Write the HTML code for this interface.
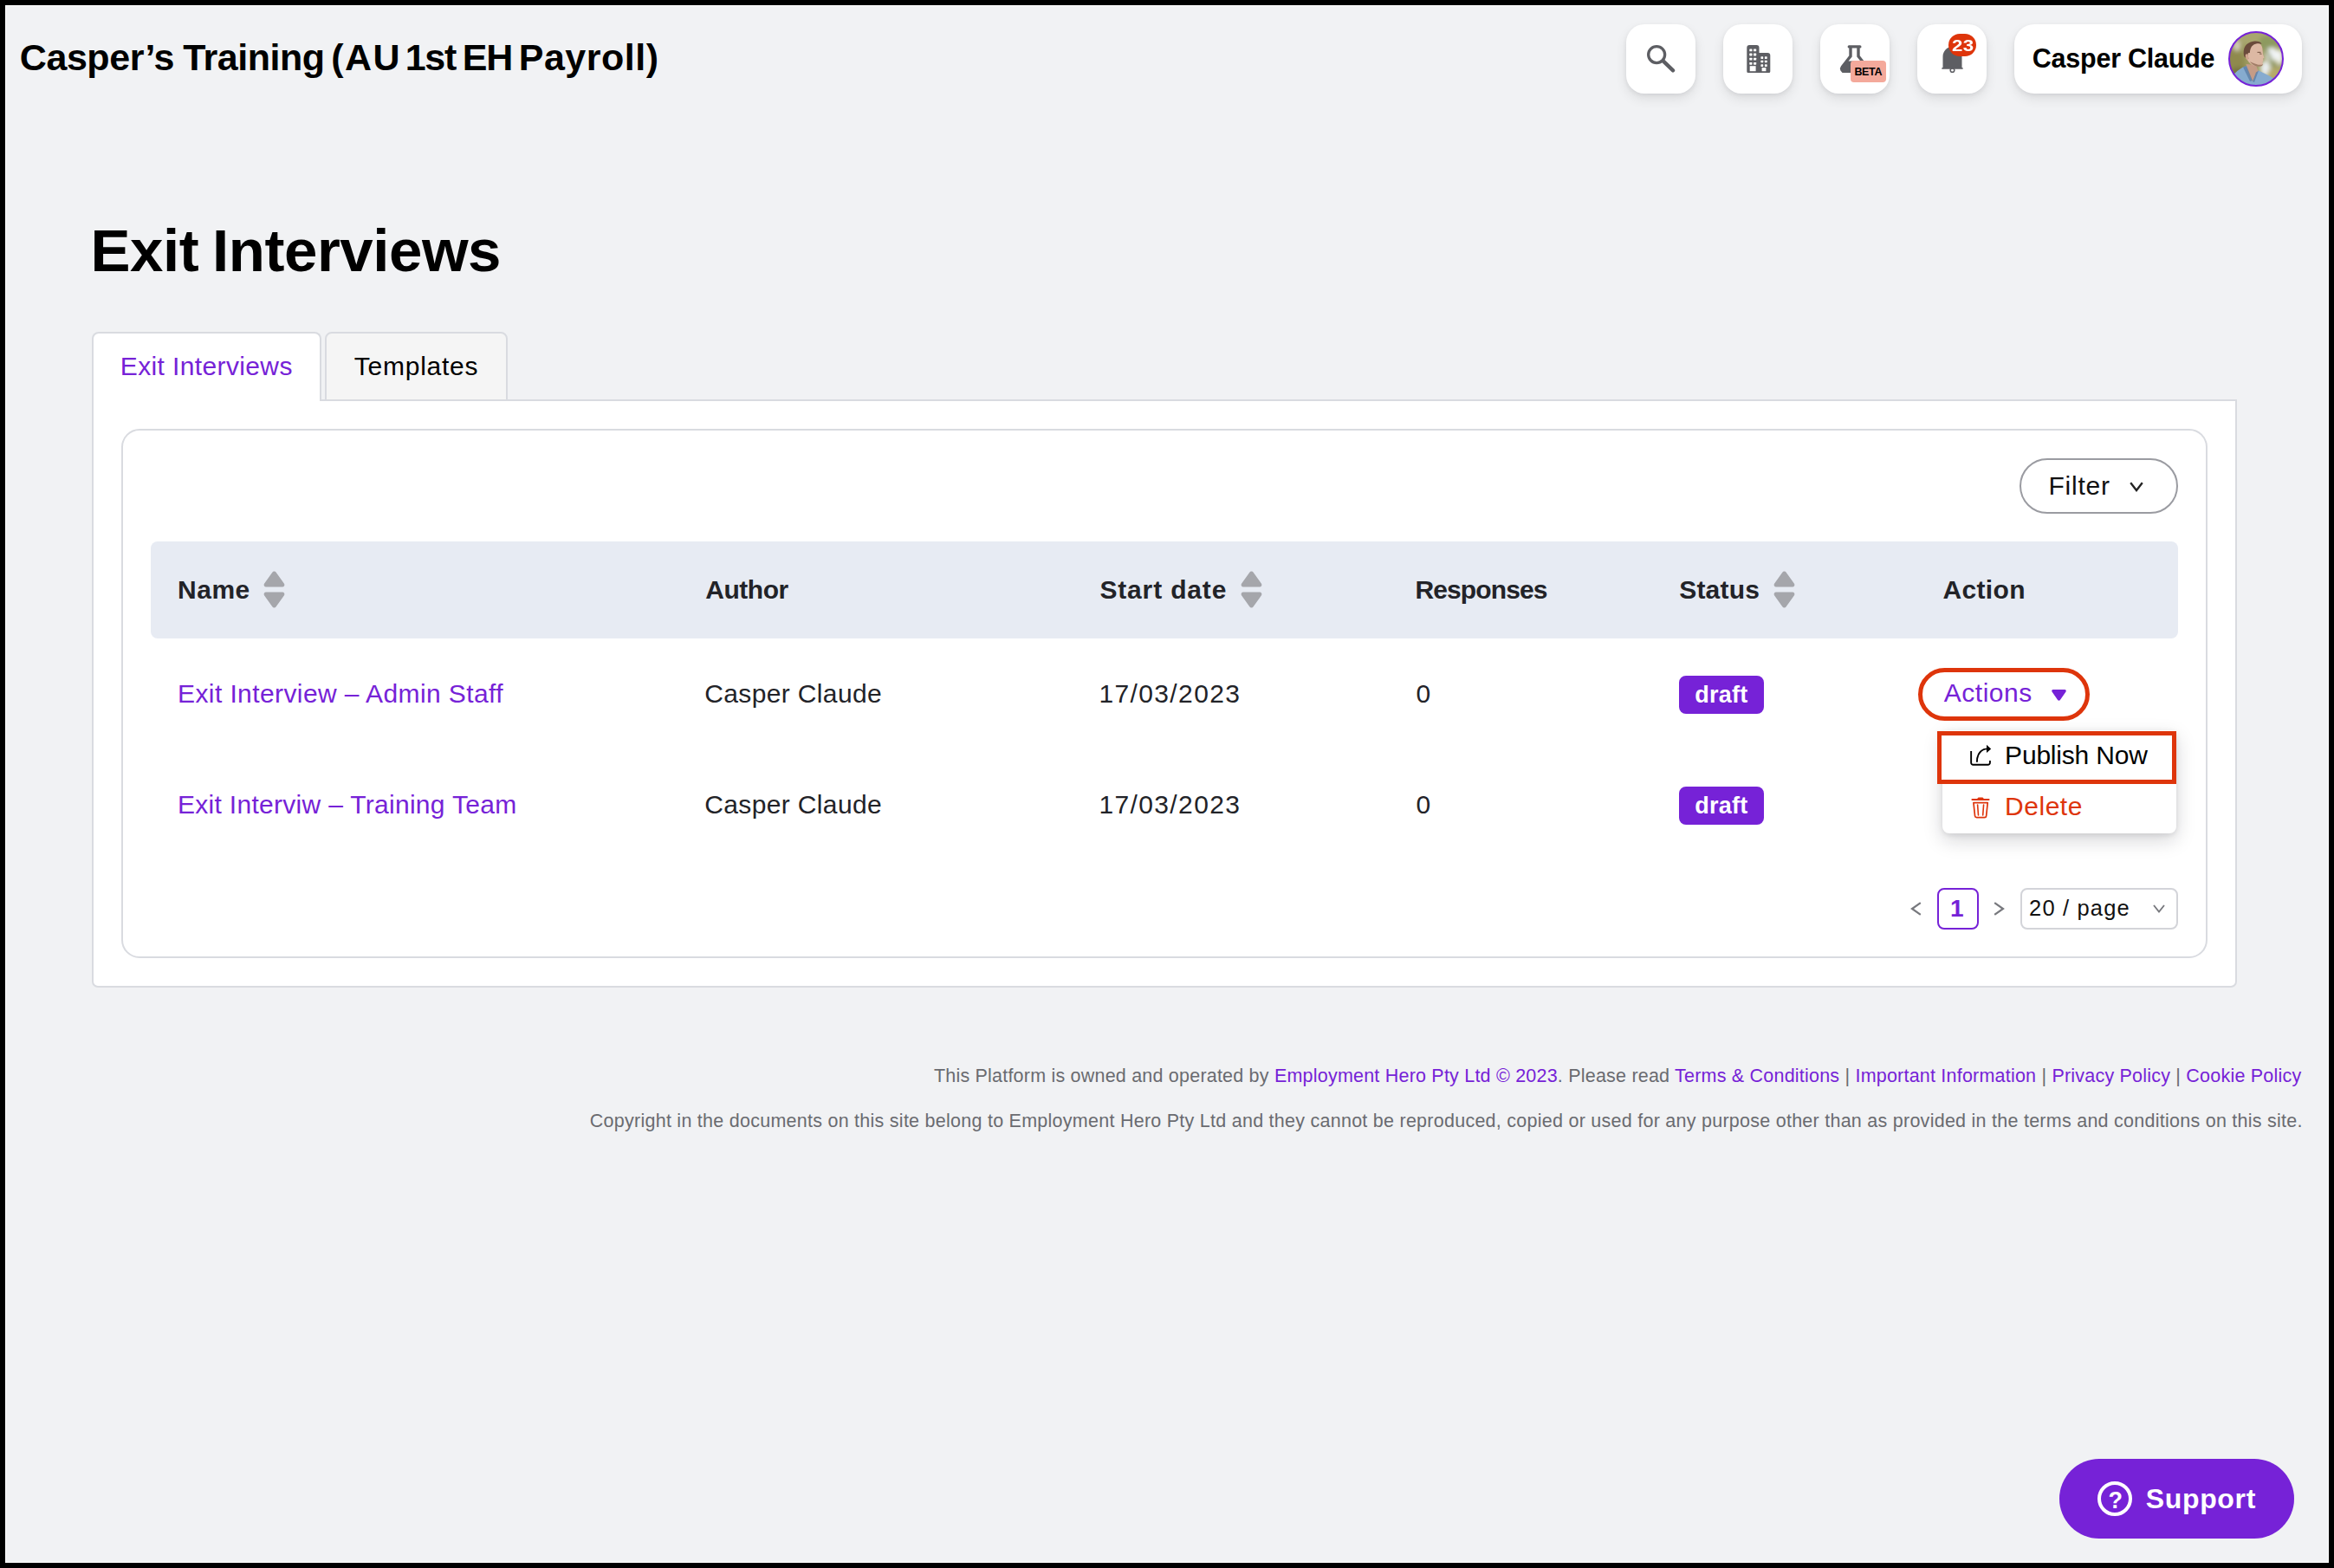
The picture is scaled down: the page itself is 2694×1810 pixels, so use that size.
<!DOCTYPE html>
<html lang="en">
<head>
<meta charset="utf-8">
<title>Exit Interviews</title>
<style>
html,body{margin:0;padding:0;}
body{width:2694px;height:1810px;overflow:hidden;background:#000;font-family:"Liberation Sans",sans-serif;}
#frame{position:absolute;left:0;top:0;width:2694px;height:1810px;background:#000;overflow:hidden;}
#page{position:absolute;left:6px;top:6px;width:2680px;height:1796px;border:1px solid #fff;background:#f1f2f4;}
.a{position:absolute;box-sizing:border-box;}
.t{position:absolute;white-space:nowrap;margin:0;padding:0;}
.hbtn{width:80px;height:80px;top:28px;border-radius:21px;background:#fff;box-shadow:0 6px 14px rgba(20,20,25,.09),0 2px 5px rgba(20,20,25,.07);}
.bd{border:2px solid #d9dbe0;}
.arrow{fill:#a5a6ab;}
svg{position:absolute;overflow:visible;}

</style>
</head>
<body>
<div id="frame">
<div id="page"></div>

<!-- top bar buttons -->
<div class="a hbtn" style="left:1877px"></div>
<div class="a hbtn" style="left:1989px"></div>
<div class="a hbtn" style="left:2101px"></div>
<div class="a hbtn" style="left:2213px"></div>
<div class="a hbtn" style="left:2325px;width:332px;border-radius:23px"></div>

<!-- search icon -->
<svg style="left:1877px;top:28px" width="80" height="80" viewBox="0 0 80 80"><circle cx="35.150" cy="35.050" r="9.500" fill="none" stroke="#5d5e63" stroke-width="3.300"/><path d="M43.200 42.900 L54.100 53.300" stroke="#5d5e63" stroke-width="4.400" stroke-linecap="round"/></svg>
<!-- building icon -->
<svg style="left:2015.500px;top:52px" width="28" height="33" viewBox="0 0 28 33"><path d="M3.300 0h8.200a3 3 0 0 1 3 3V9h9.800a3 3 0 0 1 3 3V30.600a1.500 1.500 0 0 1 -1.500 1.500H1.800a1.500 1.500 0 0 1 -1.500 -1.500V3a3 3 0 0 1 3 -3z" fill="#5d5e63"/><g fill="#fff"><rect x="3.300" y="4.500" width="3.200" height="2.800" rx=".6"/><rect x="8" y="4.500" width="3.200" height="2.800" rx=".6"/><rect x="3.300" y="9.600" width="3.200" height="2.800" rx=".6"/><rect x="8" y="9.600" width="3.200" height="2.800" rx=".6"/><rect x="3.300" y="14.700" width="3.200" height="2.800" rx=".6"/><rect x="8" y="14.700" width="3.200" height="2.800" rx=".6"/><rect x="3.300" y="19.900" width="3.200" height="2.800" rx=".6"/><rect x="8" y="19.900" width="3.200" height="2.800" rx=".6"/><rect x="3.700" y="24.200" width="6.900" height="6"/><rect x="16.400" y="13.300" width="2.800" height="2.600" rx=".6"/><rect x="20.900" y="13.300" width="2.800" height="2.600" rx=".6"/><rect x="16.400" y="17.700" width="2.800" height="2.600" rx=".6"/><rect x="20.900" y="17.700" width="2.800" height="2.600" rx=".6"/><rect x="16.400" y="22.300" width="2.800" height="2.600" rx=".6"/><rect x="20.900" y="22.300" width="2.800" height="2.600" rx=".6"/><rect x="17.600" y="26.100" width="4.800" height="4.100"/></g></svg>
<!-- flask icon -->
<svg style="left:2124px;top:52px" width="33" height="33" viewBox="0 0 33 33"><rect x="8.600" y="0.300" width="15.900" height="3.300" rx="1.600" fill="#5d5e63"/><path d="M10.300 2V12.300L1 24.300a4.800 4.800 0 0 0 3.800 7.800H28.200a4.800 4.800 0 0 0 3.800 -7.800L22.700 12.300V2z" fill="#5d5e63"/><path d="M13.700 3.600V13.400L9.600 18.600H23.400L19.300 13.400V3.600z" fill="#fff"/></svg>
<div class="a" style="left:2136.400px;top:70.400px;width:40.200px;height:25.100px;border-radius:4px;background:#f4a99b"></div>
<!-- bell icon -->
<svg style="left:2240.500px;top:54px" width="25" height="31" viewBox="0 0 25 31"><circle cx="12.500" cy="27" r="2.300" fill="#fff" stroke="#5d5e63" stroke-width="1.600"/><path d="M12.500 0c6 0 11 4.800 11 11.500v12.600h0.400a0.850 0.850 0 0 1 0 1.700H1.100a0.850 0.850 0 0 1 0 -1.700h0.400V11.500C1.500 4.800 6.500 0 12.500 0z" fill="#5d5e63"/></svg>
<div class="a" style="left:2248.900px;top:38.700px;width:32.300px;height:26.600px;border-radius:13.300px;background:#de350b"></div>

<!-- avatar -->
<svg style="left:2572px;top:36px" width="64" height="64" viewBox="0 0 64 64">
<defs><clipPath id="avc"><circle cx="32" cy="32" r="30.800"/></clipPath>
<filter id="bl" x="-30%" y="-30%" width="160%" height="160%"><feGaussianBlur stdDeviation="2.600"/></filter>
<filter id="bs" x="-10%" y="-10%" width="120%" height="120%"><feGaussianBlur stdDeviation="0.700"/></filter></defs>
<g clip-path="url(#avc)">
<rect width="64" height="64" fill="#9c9a60"/>
<g filter="url(#bl)">
<ellipse cx="30" cy="6" rx="30" ry="10" fill="#a8a66e"/>
<ellipse cx="7" cy="36" rx="12" ry="18" fill="#8f8a4e"/>
<ellipse cx="10" cy="17" rx="4" ry="6" fill="#d6d0bb"/>
<ellipse cx="13" cy="50" rx="12" ry="8" fill="#74733f"/>
<ellipse cx="46" cy="13" rx="11" ry="8" fill="#8d9a5e"/>
<ellipse cx="50" cy="27" rx="8" ry="8" fill="#f0f3f5"/>
<ellipse cx="59" cy="30" rx="4" ry="9" fill="#f2f4f3"/>
<ellipse cx="43" cy="43" rx="6" ry="9" fill="#e9edf0"/>
<path d="M41 17 L54 42" stroke="#8c9a63" stroke-width="3.500" fill="none"/>
<ellipse cx="55" cy="50" rx="10" ry="8" fill="#b6aa68"/>
</g>
<g filter="url(#bs)">
<path d="M5 52C8 47 13 44 17 41.500L21 40l10 6 4 -0.500C42 49 48 51.500 53 55L50 66H8z" fill="#86abcf"/>
<path d="M20.500 38L32 39l2.500 7 -6.500 12 -5 -9z" fill="#c59c86"/>
<path d="M17 41.500L21 40l7 17 -3 1zM35 45.500l-3 2 -4 10.500 2 1z" fill="#5b7ea6" opacity=".8"/>
<g transform="translate(0,4.100) scale(1,0.900)">
<path d="M19 23C19 14 24 9.500 31 9.500c5.500 0 8.500 4 8.500 9.500 0 2 0.500 4 0.500 6l1.500 4.500 -1.500 1 0.300 2.700 -0.800 1.300 0.300 2.500c-0.300 2 -2 3.300 -4.800 3.500 -4 0.300 -8.500 -1.500 -11 -5C21.500 32 19 28.500 19 23z" fill="#dcb8a3"/>
<path d="M25 34.500c2.500 4 7 6.500 11 6.200 2.500 -0.200 3.800 -1.200 4.200 -3 -2 1.300 -5 1.200 -8 0 -3 -1.200 -5.500 -2.500 -7.200 -3.200z" fill="#a27d67"/>
<path d="M18 27C16.500 17 20 10 29 8.500c4.500 -0.700 8.500 0.300 9.500 3.500 -3.500 -1.200 -7.500 -0.500 -10 1.500 -2.500 2 -3.500 5.500 -3.700 10 -0.800 -0.500 -2 -0.300 -2.300 1.500 -0.300 1.800 0.300 4 1 5.500 -2 -0.500 -4.500 -1 -5.500 -3.500z" fill="#6a4b3a"/>
<path d="M20.500 24.800c1.500 -0.500 2.300 1 2.500 3.200 0.200 2.200 0.200 4.300 -0.800 4.500 -1.200 -0.500 -2.200 -2.500 -2.400 -4.500 -0.200 -1.500 0 -2.800 0.700 -3.200z" fill="#cfa48e"/>
<path d="M33.500 22.500h4M36 24.300l2.500 0.300" stroke="#6a4b3a" stroke-width="1" fill="none"/>
</g>
</g>
</g>
<circle cx="32" cy="32" r="31" fill="none" stroke="#7622d7" stroke-width="2"/>
</svg>

<!-- tabs + panel -->
<div class="a bd" style="left:106px;top:461px;width:2476px;height:679px;background:#fff;border-radius:0 0 7px 7px"></div>
<div class="a bd" style="left:375px;top:383px;width:211px;height:80px;background:#f5f5f5;border-radius:8px 8px 0 0"></div>
<div class="a bd" style="left:106px;top:383px;width:265px;height:80px;background:#fff;border-radius:8px 8px 0 0;border-bottom:none"></div>

<!-- card -->
<div class="a bd" style="left:140px;top:495px;width:2408px;height:611px;background:#fff;border-radius:21px"></div>

<!-- filter -->
<div class="a" style="left:2331px;top:529px;width:183px;height:64px;border:2px solid #9a9ba1;border-radius:32px;background:#fff"></div>
<svg style="left:2458px;top:555.500px" width="16" height="12" viewBox="0 0 16 12"><path d="M1.200 1.200 L8 10 L14.800 1.200" fill="none" stroke="#222" stroke-width="2.300" stroke-linejoin="miter"/></svg>

<!-- table header -->
<div class="a" style="left:174px;top:625px;width:2340px;height:111.500px;background:#e7ebf3;border-radius:8px"></div>
<svg style="left:303.500px;top:659px" width="25" height="43" viewBox="0 0 25 43"><path class="arrow" d="M10.300 1.800a2.600 2.600 0 0 1 4.400 0l9.300 13a2.400 2.400 0 0 1 -2 3.700H3a2.400 2.400 0 0 1 -2 -3.700z"/><path class="arrow" d="M10.300 41.200a2.600 2.600 0 0 0 4.400 0l9.300 -13a2.400 2.400 0 0 0 -2 -3.700H3a2.400 2.400 0 0 0 -2 3.700z"/></svg>
<svg style="left:1431.500px;top:659px" width="25" height="43" viewBox="0 0 25 43"><path class="arrow" d="M10.300 1.800a2.600 2.600 0 0 1 4.400 0l9.300 13a2.400 2.400 0 0 1 -2 3.700H3a2.400 2.400 0 0 1 -2 -3.700z"/><path class="arrow" d="M10.300 41.200a2.600 2.600 0 0 0 4.400 0l9.300 -13a2.400 2.400 0 0 0 -2 -3.700H3a2.400 2.400 0 0 0 -2 3.700z"/></svg>
<svg style="left:2046.500px;top:659px" width="25" height="43" viewBox="0 0 25 43"><path class="arrow" d="M10.300 1.800a2.600 2.600 0 0 1 4.400 0l9.300 13a2.400 2.400 0 0 1 -2 3.700H3a2.400 2.400 0 0 1 -2 -3.700z"/><path class="arrow" d="M10.300 41.200a2.600 2.600 0 0 0 4.400 0l9.300 -13a2.400 2.400 0 0 0 -2 -3.700H3a2.400 2.400 0 0 0 -2 3.700z"/></svg>

<!-- draft badges -->
<div class="a" style="left:1938px;top:780px;width:98px;height:44px;border-radius:8px;background:#7622d7"></div>
<div class="a" style="left:1938px;top:908px;width:98px;height:44px;border-radius:8px;background:#7622d7"></div>

<!-- actions pill -->
<div class="a" style="left:2214px;top:771px;width:198px;height:61px;border:5px solid #de350b;border-radius:31px;background:#fff"></div>
<svg style="left:2367.500px;top:796px" width="17" height="13" viewBox="0 0 17 13"><path d="M1.800 0h13.400a1.600 1.600 0 0 1 1.300 2.500l-6.600 9.600a1.700 1.700 0 0 1 -2.800 0L0.500 2.500A1.600 1.600 0 0 1 1.800 0z" fill="#7622d7"/></svg>

<!-- dropdown -->
<div class="a" style="left:2242px;top:843px;width:270px;height:119px;border-radius:4px 4px 8px 8px;background:#fff;box-shadow:0 8px 22px rgba(20,20,30,.17),0 2px 6px rgba(20,20,30,.10)"></div>
<div class="a" style="left:2236px;top:844px;width:276px;height:61px;border:5px solid #de350b;background:#fff"></div>
<!-- publish icon -->
<svg style="left:2274px;top:860px" width="25" height="24" viewBox="0 0 25 24"><path d="M1.150 7V20.500a2.300 2.300 0 0 0 2.300 2.300H20.600a2.300 2.300 0 0 0 2.300 -2.300V18" fill="none" stroke="#000" stroke-width="1.900" stroke-linecap="butt"/><path d="M7.900 19.800C7.900 10.200 12 5 19.800 4.400" fill="none" stroke="#000" stroke-width="1.900"/><path d="M19 -0.200L24.200 4.400L19 9z" fill="#000"/></svg>
<!-- delete icon -->
<svg style="left:2275px;top:919.500px" width="22" height="25" viewBox="0 0 22 25"><path d="M1.400 3H20.600" stroke="#de350b" stroke-width="1.900" stroke-linecap="round"/><path d="M6.700 2.600L8.500 0.500H13.500L15.300 2.600z" fill="#de350b"/><path d="M2.950 6.650H19.250L17.650 21.900a2 2 0 0 1 -2 1.750H6.550a2 2 0 0 1 -2 -1.750z" fill="none" stroke="#de350b" stroke-width="1.700" stroke-linejoin="round"/><path d="M7.600 9L8.500 21M14.600 9L13.700 21" stroke="#de350b" stroke-width="1.600" stroke-linecap="round"/></svg>

<!-- pagination -->
<svg style="left:2205.200px;top:1041px" width="13" height="16" viewBox="0 0 13 16"><path d="M11.800 1.200 L2 8 L11.800 14.800" fill="none" stroke="#77787d" stroke-width="2.200"/></svg>
<div class="a" style="left:2236px;top:1025px;width:48px;height:48px;border:2.300px solid #7622d7;border-radius:8px;background:#fff"></div>
<svg style="left:2300.700px;top:1041px" width="13" height="16" viewBox="0 0 13 16"><path d="M1.200 1.200 L11 8 L1.200 14.800" fill="none" stroke="#77787d" stroke-width="2.200"/></svg>
<div class="a" style="left:2332px;top:1025px;width:182px;height:48px;border:2px solid #d3d4d9;border-radius:8px;background:#fff"></div>
<svg style="left:2484.800px;top:1044px" width="14" height="10" viewBox="0 0 14 10"><path d="M1 1 L7 8.500 L13 1" fill="none" stroke="#77787d" stroke-width="1.900"/></svg>

<!-- support -->
<div class="a" style="left:2377px;top:1683.500px;width:271px;height:92.500px;border-radius:46.500px;background:#7622d7"></div>
<svg style="left:2421px;top:1710px" width="40" height="40" viewBox="0 0 40 40"><circle cx="20" cy="20" r="18" fill="none" stroke="#fff" stroke-width="4"/></svg>

<div class="t" id="title" style="left:20.8px;top:45.4px;font-size:43px;line-height:43px;font-weight:700;color:#000;"><span style="position:absolute;left:2.0px;top:0;letter-spacing:-0.443px">Casper’s</span> <span style="position:absolute;left:190.4px;top:0;letter-spacing:-0.471px">Training</span> <span style="position:absolute;left:361.4px;top:0;letter-spacing:1.505px">(AU</span> <span style="position:absolute;left:446.9px;top:0;letter-spacing:-1.290px">1st</span> <span style="position:absolute;left:513.0px;top:0;letter-spacing:-1.290px">EH</span> <span style="position:absolute;left:577.9px;top:0;letter-spacing:0.514px">Payroll)</span></div>
<div class="t" id="uname" style="left:2345.8px;top:51.7px;font-size:30.5px;line-height:30.5px;font-weight:700;color:#000;letter-spacing:-0.233px;">Casper Claude</div>
<h1 class="t" id="h1" style="left:105.0px;top:254.9px;font-size:69px;line-height:69px;font-weight:700;color:#000;"><span style="position:absolute;left:-0.5px;top:0;letter-spacing:-0.433px">Exit</span> <span style="position:absolute;left:140.0px;top:0;letter-spacing:-0.444px">Interviews</span></h1>
<a class="t" id="tab1" style="left:138.8px;top:408.1px;font-size:30px;line-height:30px;font-weight:400;color:#7622d7;letter-spacing:0.371px;">Exit Interviews</a>
<a class="t" id="tab2" style="left:408.8px;top:407.6px;font-size:30px;line-height:30px;font-weight:400;color:#000;letter-spacing:0.750px;">Templates</a>
<div class="t" id="filter" style="left:2364.4px;top:545.6px;font-size:30px;line-height:30px;font-weight:400;color:#111;letter-spacing:0.800px;">Filter</div>
<div class="t" id="th1" style="left:205.0px;top:665.9px;font-size:30px;line-height:30px;font-weight:700;color:#222328;letter-spacing:0.533px;">Name</div>
<div class="t" id="th2" style="left:814.2px;top:665.9px;font-size:30px;line-height:30px;font-weight:700;color:#222328;letter-spacing:-0.440px;">Author</div>
<div class="t" id="th3" style="left:1269.4px;top:665.9px;font-size:30px;line-height:30px;font-weight:700;color:#222328;letter-spacing:0.844px;">Start date</div>
<div class="t" id="th4" style="left:1633.4px;top:665.9px;font-size:30px;line-height:30px;font-weight:700;color:#222328;letter-spacing:-0.875px;">Responses</div>
<div class="t" id="th5" style="left:1938.2px;top:665.9px;font-size:30px;line-height:30px;font-weight:700;color:#222328;letter-spacing:0.200px;">Status</div>
<div class="t" id="th6" style="left:2242.4px;top:665.9px;font-size:30px;line-height:30px;font-weight:700;color:#222328;letter-spacing:0.360px;">Action</div>
<a class="t" id="r0a" style="left:205.0px;top:785.6px;font-size:30px;line-height:30px;font-weight:400;color:#7622d7;letter-spacing:0.407px;">Exit Interview – Admin Staff</a>
<div class="t" id="r0b" style="left:813.2px;top:785.6px;font-size:30px;line-height:30px;font-weight:400;color:#222328;letter-spacing:0.367px;">Casper Claude</div>
<div class="t" id="r0c" style="left:1268.4px;top:785.6px;font-size:30px;line-height:30px;font-weight:400;color:#222328;letter-spacing:1.378px;">17/03/2023</div>
<div class="t" id="r0d" style="left:1634.4px;top:785.6px;font-size:30px;line-height:30px;font-weight:400;color:#222328;">0</div>
<a class="t" id="r1a" style="left:205.0px;top:913.9px;font-size:30px;line-height:30px;font-weight:400;color:#7622d7;letter-spacing:0.293px;">Exit Interviw – Training Team</a>
<div class="t" id="r1b" style="left:813.2px;top:913.9px;font-size:30px;line-height:30px;font-weight:400;color:#222328;letter-spacing:0.367px;">Casper Claude</div>
<div class="t" id="r1c" style="left:1268.4px;top:913.9px;font-size:30px;line-height:30px;font-weight:400;color:#222328;letter-spacing:1.378px;">17/03/2023</div>
<div class="t" id="r1d" style="left:1634.4px;top:913.9px;font-size:30px;line-height:30px;font-weight:400;color:#222328;">0</div>
<div class="t" id="draft0" style="left:1956.3px;top:788.5px;font-size:27px;line-height:27px;font-weight:700;color:#fff;letter-spacing:0.250px;">draft</div>
<div class="t" id="draft1" style="left:1956.3px;top:916.5px;font-size:27px;line-height:27px;font-weight:700;color:#fff;letter-spacing:0.250px;">draft</div>
<div class="t" id="actions" style="left:2243.8px;top:785.4px;font-size:30px;line-height:30px;font-weight:400;color:#7622d7;letter-spacing:0.500px;">Actions</div>
<div class="t" id="publish" style="left:2314.1px;top:856.6px;font-size:30px;line-height:30px;font-weight:400;color:#000;letter-spacing:-0.200px;">Publish Now</div>
<div class="t" id="delete" style="left:2314.1px;top:916.2px;font-size:30px;line-height:30px;font-weight:400;color:#de350b;letter-spacing:0.520px;">Delete</div>
<div class="t" id="pg1" style="left:2251.0px;top:1034.7px;font-size:28px;line-height:28px;font-weight:700;color:#7622d7;">1</div>
<div class="t" id="pgsel" style="left:2342.1px;top:1036.4px;font-size:25.5px;line-height:25.5px;font-weight:400;color:#111;letter-spacing:1.150px;">20 / page</div>
<div class="t" id="support" style="left:2476.7px;top:1713.9px;font-size:32px;line-height:32px;font-weight:700;color:#fff;letter-spacing:0.667px;">Support</div>
<div class="t" id="supq" style="left:2433.4px;top:1718.8px;font-size:27px;line-height:27px;font-weight:700;color:#fff;">?</div>
<div class="t" id="beta" style="left:2140.4px;top:77.0px;font-size:12.5px;line-height:12.5px;font-weight:700;color:#000;letter-spacing:-0.333px;">BETA</div>
<div class="t" id="n23" style="left:2252.8px;top:44.7px;font-size:17.5px;line-height:17.5px;font-weight:700;color:#fff;transform:scaleX(1.27);transform-origin:0 50%;letter-spacing:0.3px;">23</div>
<div class="t" id="foot1" style="left:1077.9px;top:1231.8px;font-size:21.5px;line-height:21.5px;font-weight:400;color:#6a6b70;letter-spacing:0.211px;">This Platform is owned and operated by <a style="color:#7622d7">Employment Hero Pty Ltd © 2023</a>. Please read <a style="color:#7622d7">Terms &amp; Conditions</a> | <a style="color:#7622d7">Important Information</a> | <a style="color:#7622d7">Privacy Policy</a> | <a style="color:#7622d7">Cookie Policy</a></div>
<div class="t" id="foot2" style="left:680.8px;top:1283.8px;font-size:21.5px;line-height:21.5px;font-weight:400;color:#6a6b70;letter-spacing:0.258px;">Copyright in the documents on this site belong to Employment Hero Pty Ltd and they cannot be reproduced, copied or used for any purpose other than as provided in the terms and conditions on this site.</div>
</div>
</body>
</html>
